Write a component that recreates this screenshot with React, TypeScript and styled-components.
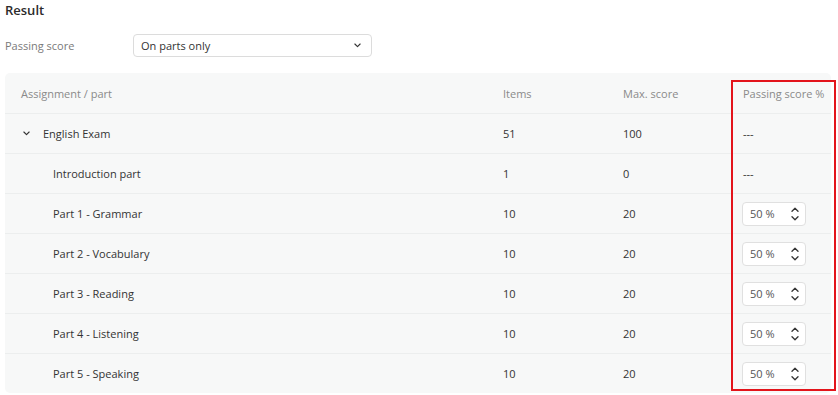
import styled, { createGlobalStyle } from "styled-components";

const GlobalStyle = createGlobalStyle`
    body{
        margin: 0;
        background: #ffffff;
        font-family: "Open Sans", "Noto Sans", sans-serif;
        color: #333333;
    }
`

const rows = [
    { name: "English Exam", items: "51", max: "100", pass: null, parent: true },
    { name: "Introduction part", items: "1", max: "0", pass: null, parent: false },
    { name: "Part 1 - Grammar", items: "10", max: "20", pass: "50 %", parent: false },
    { name: "Part 2 - Vocabulary", items: "10", max: "20", pass: "50 %", parent: false },
    { name: "Part 3 - Reading", items: "10", max: "20", pass: "50 %", parent: false },
    { name: "Part 4 - Listening", items: "10", max: "20", pass: "50 %", parent: false },
    { name: "Part 5 - Speaking", items: "10", max: "20", pass: "50 %", parent: false },
]

function Chevron({ up, small }: { up?: boolean, small?: boolean }) {
    const w = small ? 7 : 8
    return (
        <svg width={w} height="5" viewBox="0 0 8 5">
            <path d={up ? "M1 4.2 L4 1.2 L7 4.2" : "M1 0.8 L4 3.8 L7 0.8"} fill="none" stroke="#333" strokeWidth="1.3" strokeLinecap="round" strokeLinejoin="round" />
        </svg>
    )
}

export default function App() {
    return (
        <Page>
            <GlobalStyle />
            <Title>Result</Title>
            <SettingRow>
                <Label>Passing score</Label>
                <Select>
                    <span>On parts only</span>
                    <Chevron small />
                </Select>
            </SettingRow>
            <Panel>
                <HeaderRow>
                    <HeadCell>Assignment / part</HeadCell>
                    <HeadCell>Items</HeadCell>
                    <HeadCell>Max. score</HeadCell>
                    <HeadCell>Passing score %</HeadCell>
                </HeaderRow>
                {rows.map((r) => (
                    <Row key={r.name}>
                        <NameCell $indent={!r.parent}>
                            {r.parent && <Toggle><Chevron small /></Toggle>}
                            {r.name}
                        </NameCell>
                        <Cell>{r.items}</Cell>
                        <Cell>{r.max}</Cell>
                        <Cell>
                            {r.pass ? (
                                <Spinner>
                                    <span>{r.pass}</span>
                                    <Arrows>
                                        <Chevron up />
                                        <Chevron />
                                    </Arrows>
                                </Spinner>
                            ) : "---"}
                        </Cell>
                    </Row>
                ))}
                <Highlight />
            </Panel>
        </Page>
    )
}

const Page = styled.div`
    padding: 0 6px 0 5px;
`

const Title = styled.div`
    font-size: 13px;
    font-weight: 600;
    color: #2b2b2b;
    line-height: 18px;
    padding-top: 1px;
`

const SettingRow = styled.div`
    display: flex;
    align-items: center;
    margin-top: 14px;
    height: 24px;
`

const Label = styled.div`
    width: 128px;
    font-size: 11px;
    color: #7a7a7a;
`

const Select = styled.div`
    width: 239px;
    height: 23px;
    box-sizing: border-box;
    border: 1px solid #dcdcdc;
    border-radius: 4px;
    display: flex;
    align-items: center;
    justify-content: space-between;
    padding: 0 10px 0 7px;
    font-size: 11px;
    color: #333;
`

const Panel = styled.div`
    position: relative;
    margin-top: 16px;
    background: #f7f8f8;
    border-radius: 5px;
    margin-right: 1px;
`

const Grid = styled.div`
    display: grid;
    grid-template-columns: 482px 120px 120px 1fr;
    padding-left: 16px;
    height: 40px;
    align-items: center;
`

const HeaderRow = styled(Grid)``

const Row = styled(Grid)`
    border-top: 1px solid #eceeee;
    height: 39px;
`

const HeadCell = styled.div`
    font-size: 11px;
    color: #8a8a8a;
`

const Cell = styled.div`
    font-size: 11px;
    color: #333;
    display: flex;
    align-items: center;
`

const NameCell = styled(Cell)<{ $indent: boolean }>`
    padding-left: ${(p) => (p.$indent ? "32px" : "0")};
`

const Toggle = styled.span`
    display: inline-flex;
    width: 20px;
    padding-left: 2px;
`

const Spinner = styled.div`
    margin-left: -1px;
    width: 64px;
    height: 24px;
    box-sizing: border-box;
    background: #ffffff;
    border: 1px solid #e0e0e0;
    border-radius: 4px;
    display: flex;
    align-items: center;
    justify-content: space-between;
    padding: 0 6px 0 7px;
    color: #555;
`

const Arrows = styled.div`
    display: flex;
    flex-direction: column;
    gap: 4px;
`

const Highlight = styled.div`
    position: absolute;
    left: 726px;
    top: 7px;
    width: 105px;
    height: 311px;
    box-sizing: border-box;
    border: 2px solid #e3141b;
    pointer-events: none;
`
